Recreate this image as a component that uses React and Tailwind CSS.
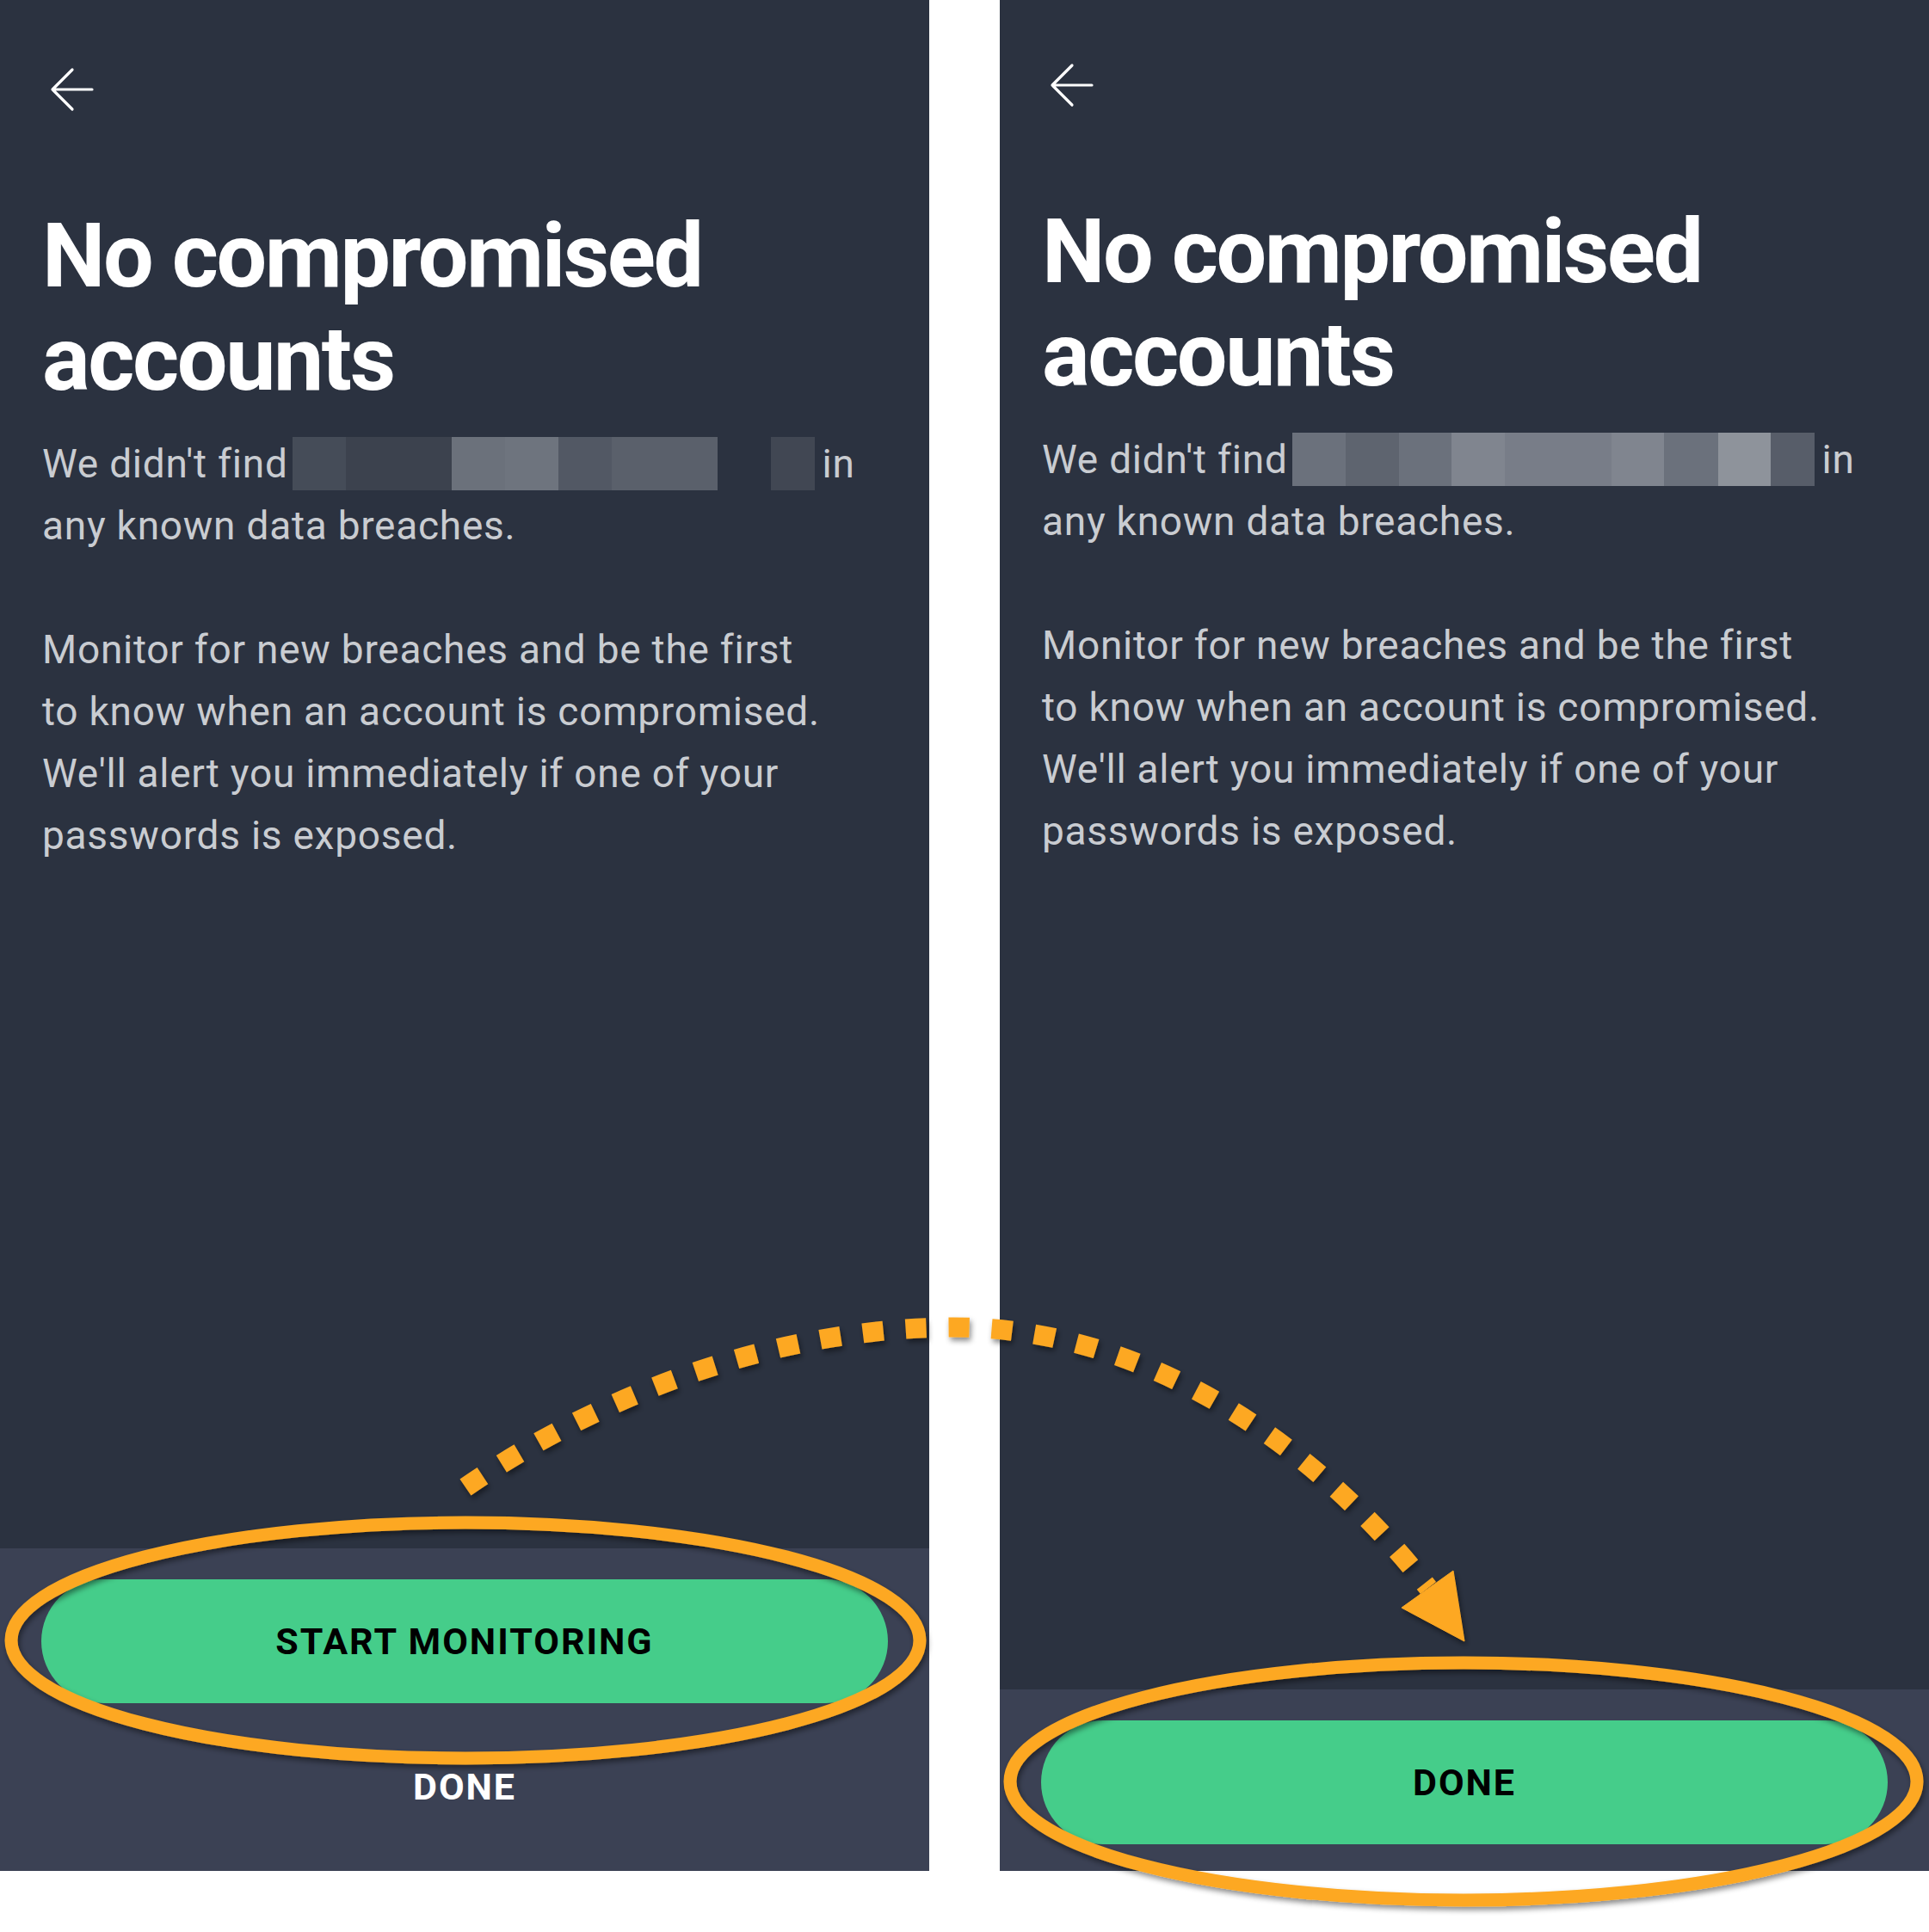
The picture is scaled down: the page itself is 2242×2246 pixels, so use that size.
import React from "react";

const leftCells = [
    { w: "w-[62px]", c: "bg-[#454c58]" },
    { w: "w-[62px]", c: "bg-[#3c424e]" },
    { w: "w-[61px]", c: "bg-[#3c424e]" },
    { w: "w-[62px]", c: "bg-[#6b717b]" },
    { w: "w-[62px]", c: "bg-[#6e747e]" },
    { w: "w-[62px]", c: "bg-[#525864]" },
    { w: "w-[61px]", c: "bg-[#5a606b]" },
    { w: "w-[62px]", c: "bg-[#5a606b]" },
    { w: "w-[62px]", c: "bg-transparent" },
    { w: "w-[51px]", c: "bg-[#414753]" },
];

const rightCells = [
    { w: "w-[62px]", c: "bg-[#6b717c]" },
    { w: "w-[62px]", c: "bg-[#5e646f]" },
    { w: "w-[61px]", c: "bg-[#6b717c]" },
    { w: "w-[62px]", c: "bg-[#80858f]" },
    { w: "w-[62px]", c: "bg-[#787d88]" },
    { w: "w-[62px]", c: "bg-[#787d88]" },
    { w: "w-[61px]", c: "bg-[#80858f]" },
    { w: "w-[63px]", c: "bg-[#6b717c]" },
    { w: "w-[61px]", c: "bg-[#8e939b]" },
    { w: "w-[51px]", c: "bg-[#575d69]" },
];

const BackArrow = () => (
    <svg width="52" height="52" viewBox="0 0 52 52" fill="none">
        <path d="M26 3 L3 26 L26 49 M3 26 H49" stroke="#ffffff" strokeWidth="3.2" strokeLinecap="round" strokeLinejoin="round" />
    </svg>
);

const Screen = ({ cells, top, footer }) => {
    return (
        <div className="w-[1080px] h-[2175px] flex flex-col bg-[#2b3240] font-['Roboto',sans-serif]">
            <div className={`flex-1 px-[49px] ${top}`}>
                <div className="ml-[9px]">
                    <BackArrow />
                </div>
                <h1 className="mt-[108px] text-[104px] leading-[120px] font-bold text-white tracking-[-2.4px]">
                    No compromised accounts
                </h1>
                <div className="mt-[25px] text-[46px] leading-[72px] tracking-[0.75px] text-[#c9ccd1]">
                    <div className="flex items-center h-[72px] whitespace-nowrap">
                        <span>We didn't find</span>
                        <span className="flex ml-[5px]">
                            {cells.map((cell, i) => (
                                <span key={i} className={`h-[62px] ${cell.w} ${cell.c}`} />
                            ))}
                        </span>
                        <span className="ml-[9px]">in</span>
                    </div>
                    <div>any known data breaches.</div>
                    <div className="mt-[72px]">
                        Monitor for new breaches and be the first
                        <br />
                        to know when an account is compromised.
                        <br />
                        We'll alert you immediately if one of your
                        <br />
                        passwords is exposed.
                    </div>
                </div>
            </div>
            {footer}
        </div>
    );
};

const GreenButton = ({ label }) => (
    <button className="w-full h-[144px] rounded-full bg-[#45cd8a] text-black text-[43px] font-bold tracking-[2px] flex items-center justify-center">
        {label}
    </button>
);

const Overlay = () => (
    <svg className="absolute left-0 top-0 pointer-events-none" width="2242" height="2246" viewBox="0 0 2242 2246" fill="none">
        <defs>
            <filter id="shadow" x="-10%" y="-10%" width="120%" height="130%">
                <feDropShadow dx="2" dy="4" stdDeviation="3" floodColor="#000000" floodOpacity="0.45" />
            </filter>
        </defs>
        <g filter="url(#shadow)" stroke="#fda823">
            <ellipse cx="541" cy="1907" rx="528" ry="137" strokeWidth="15" />
            <ellipse cx="1701" cy="2071" rx="527" ry="138" strokeWidth="15" />
            <path
                d="M541 1729 C 700 1620, 900 1545, 1103 1543 C 1330 1541, 1530 1680, 1660 1846"
                strokeWidth="23"
                strokeDasharray="24 26"
            />
            <path d="M1689 1826 L1702 1908 L1629 1869 Z" fill="#fda823" strokeWidth="1" />
        </g>
    </svg>
);

export default function App() {
    return (
        <div className="relative w-[2242px] h-[2246px] bg-white flex items-start gap-[82px] overflow-hidden">
            <Screen
                cells={leftCells}
                top="pt-[78px]"
                footer={
                    <div className="h-[375px] bg-[#3b4154] pt-[36px] px-[48px] font-['Roboto',sans-serif]">
                        <GreenButton label="START MONITORING" />
                        <div className="mt-[67px] h-[60px] flex items-center justify-center text-white text-[43px] font-bold tracking-[2px]">
                            DONE
                        </div>
                    </div>
                }
            />
            <Screen
                cells={rightCells}
                top="pt-[73px]"
                footer={
                    <div className="h-[211px] bg-[#3b4154] pt-[36px] px-[48px] font-['Roboto',sans-serif]">
                        <GreenButton label="DONE" />
                    </div>
                }
            />
            <Overlay />
        </div>
    );
}
